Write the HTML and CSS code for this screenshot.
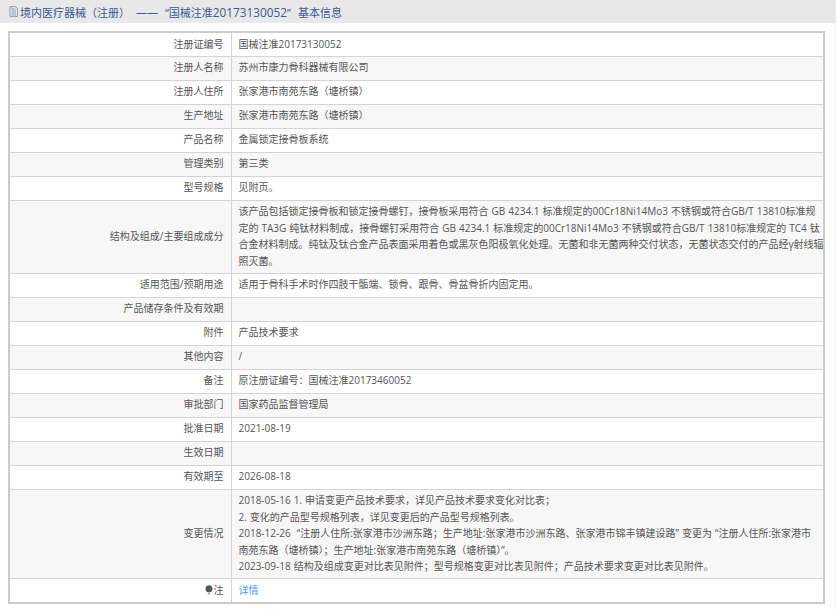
FILE: index.html
```html
<!DOCTYPE html>
<html lang="zh-CN">
<head>
  <meta charset="UTF-8" />
  <title>基本信息</title>
  <link rel="stylesheet" href="styles.css">
</head>
<body>
  <div class="title">
    <svg class="doc-icon" width="9" height="11" viewBox="0 0 9 11"><path d="M1 .5h5l2.5 2v8H1z M3 .5v2.5h3.500 M2.500 5h4.500 M2.500 7h4.500 M2.500 9h4.500" fill="none" stroke="#8ea2c6" stroke-width="1"/></svg>
    <span>境内医疗器械（注册）</span>
    <span class="dash">——</span>
    <span class="quote">“国械注准<span class="num">20173130052</span>”</span>
    <span class="tail">基本信息</span>
  </div>

  <div class="content">
    <table class="info">
      <tr><th>注册证编号</th><td>国械注准20173130052</td></tr>
      <tr><th>注册人名称</th><td>苏州市康力骨科器械有限公司</td></tr>
      <tr><th>注册人住所</th><td>张家港市南苑东路（塘桥镇）</td></tr>
      <tr><th>生产地址</th><td>张家港市南苑东路（塘桥镇）</td></tr>
      <tr><th>产品名称</th><td>金属锁定接骨板系统</td></tr>
      <tr><th>管理类别</th><td>第三类</td></tr>
      <tr><th>型号规格</th><td>见附页。</td></tr>
      <tr><th>结构及组成/主要组成成分</th><td class="lines">该产品包括锁定接骨板和锁定接骨螺钉，接骨板采用符合 GB 4234.1 标准规定的00Cr18Ni14Mo3 不锈钢或符合GB/T 13810标准规<br>定的 TA3G 纯钛材料制成，接骨螺钉采用符合 GB 4234.1 标准规定的00Cr18Ni14Mo3 不锈钢或符合GB/T 13810标准规定的 TC4 钛<br>合金材料制成。纯钛及钛合金产品表面采用着色或黑灰色阳极氧化处理。无菌和非无菌两种交付状态，无菌状态交付的产品经γ射线辐<br>照灭菌。</td></tr>
      <tr><th>适用范围/预期用途</th><td>适用于骨科手术时作四肢干骺端、锁骨、跟骨、骨盆骨折内固定用。</td></tr>
      <tr><th>产品储存条件及有效期</th><td></td></tr>
      <tr><th>附件</th><td>产品技术要求</td></tr>
      <tr><th>其他内容</th><td>/</td></tr>
      <tr><th>备注</th><td>原注册证编号：国械注准20173460052</td></tr>
      <tr><th>审批部门</th><td>国家药品监督管理局</td></tr>
      <tr><th>批准日期</th><td>2021-08-19</td></tr>
      <tr><th>生效日期</th><td></td></tr>
      <tr><th>有效期至</th><td>2026-08-18</td></tr>
      <tr><th>变更情况</th><td>2018-05-16 1. 申请变更产品技术要求，详见产品技术要求变化对比表；<br>2. 变化的产品型号规格列表，详见变更后的产品型号规格列表。<br>2018-12-26 &nbsp;“注册人住所:张家港市沙洲东路；生产地址:张家港市沙洲东路、张家港市锦丰镇建设路” 变更为 “注册人住所:张家港市南苑东路（塘桥镇）；生产地址:张家港市南苑东路（塘桥镇）”。<br>2023-09-18 结构及组成变更对比表见附件；型号规格变更对比表见附件；产品技术要求变更对比表见附件。</td></tr>
      <tr><th><svg class="pin" width="8" height="10" viewBox="0 0 8 10"><circle cx="4" cy="3.800" r="3.500" fill="#555"/><path d="M2.800 7.500h2.400v2H2.800z" fill="#aaa"/></svg>注</th><td><a href="#">详情</a></td></tr>
    </table>
  </div>
</body>
</html>
```

FILE: styles.css
```css
* {
  box-sizing: border-box;
}

html, body {
  margin: 0;
  padding: 0;
}

body {
  width: 836px;
  height: 610px;
  overflow: hidden;
  background-color: #fff;
  border-right: 1px solid #eee;
  font-family: "Open Sans", "Noto Sans CJK TC", sans-serif;
  font-size: 10px;
  word-spacing: 0.4px;
  color: #555;
}

.title {
  display: flex;
  align-items: center;
  height: 23px;
  padding-left: 9px;
  background-color: #e8e8e8;
  color: #3b5998;
  font-size: 11px;
  white-space: nowrap;
}

.doc-icon {
  margin-right: 2px;
}

.dash {
  margin: 0 6px 0 6px;
}

.quote {
  margin-left: 1px;
}

.num {
  font-size: 11.8px;
}

.tail {
  margin-left: 7px;
}

.content {
  padding: 8px 10px 0 8px;
}

.info {
  width: 100%;
  table-layout: fixed;
  border-collapse: collapse;
  border: 2px solid #ccc;
  line-height: 16.5px;
}

.info th,
.info td {
  border: 1px solid #d4d4d4;
  padding: 2.5px 7px 3.5px;
  height: 24px;
  font-weight: normal;
}

.info th {
  width: 222px;
  text-align: right;
}

.info td {
  text-align: left;
}

.info td.lines {
  white-space: nowrap;
}

.info tr:nth-child(even) {
  background-color: #f7f7f7;
}

.info a {
  color: #4a9af5;
  text-decoration: none;
}

.pin {
  vertical-align: -1px;
  margin-right: 1px;
}
```
